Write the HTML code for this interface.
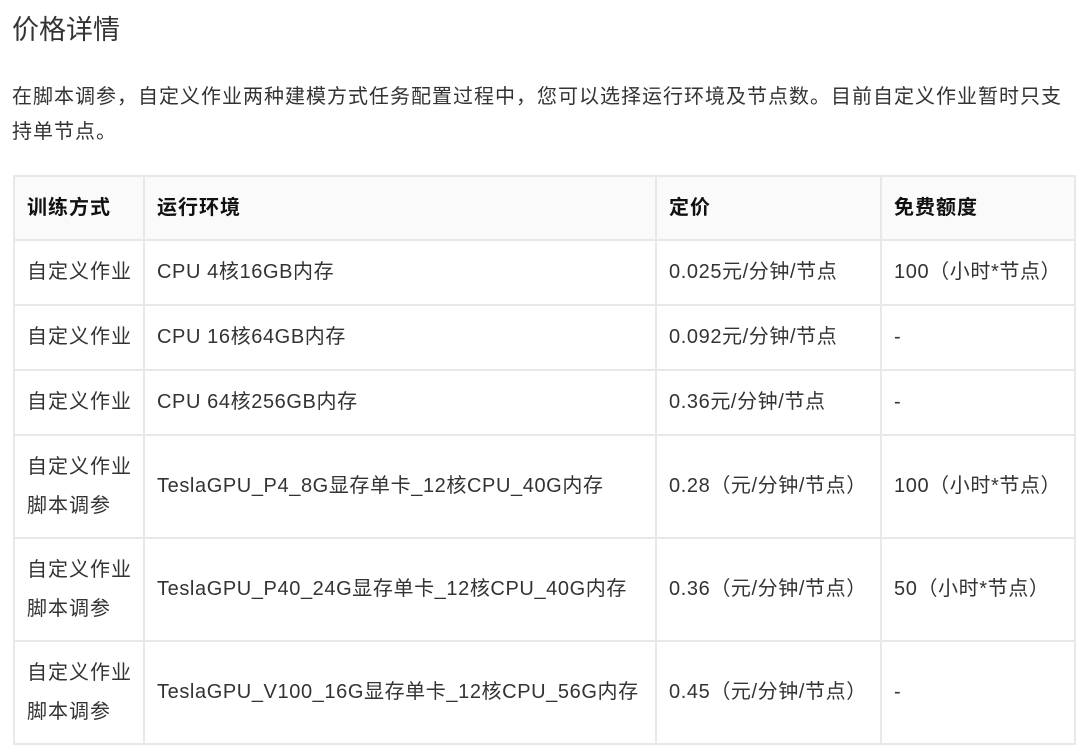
<!DOCTYPE html>
<html><head><meta charset="utf-8"><style>
body{margin:0;background:#fff;font-family:"Liberation Sans","Noto Sans CJK SC",sans-serif;color:#333;}
h1{position:absolute;left:12px;top:12px;margin:0;font-size:27px;font-weight:normal;line-height:36px;color:#333}
p{position:absolute;left:12px;top:80px;width:1060px;margin:0;font-size:20px;letter-spacing:1px;line-height:35px}
table{position:absolute;left:13px;top:175px;border-collapse:collapse;font-size:20px;table-layout:fixed;width:1061px}
td,th{border:2px solid #e8e8e8;padding:0 12px;text-align:left;line-height:39px;vertical-align:middle;white-space:nowrap;overflow:hidden;letter-spacing:0.6px}
th{background:#fafafa;font-weight:bold;color:#111;height:62px}
tr.s td{height:63px}
tr.d td{height:101px}
.c{letter-spacing:1px}
</style></head><body>
<h1>价格详情</h1>
<p>在脚本调参，自定义作业两种建模方式任务配置过程中，您可以选择运行环境及节点数。目前自定义作业暂时只支持单节点。</p>
<table>
<colgroup><col style="width:130px"><col style="width:512px"><col style="width:225px"><col style="width:194px"></colgroup>
<tr><th class="c">训练方式</th><th class="c">运行环境</th><th class="c">定价</th><th class="c">免费额度</th></tr>
<tr class="s"><td class="c">自定义作业</td><td>CPU 4核16GB内存</td><td>0.025元/分钟/节点</td><td>100（小时*节点）</td></tr>
<tr class="s"><td class="c">自定义作业</td><td>CPU 16核64GB内存</td><td>0.092元/分钟/节点</td><td>-</td></tr>
<tr class="s"><td class="c">自定义作业</td><td>CPU 64核256GB内存</td><td>0.36元/分钟/节点</td><td>-</td></tr>
<tr class="d"><td class="c">自定义作业<br>脚本调参</td><td>TeslaGPU_P4_8G显存单卡_12核CPU_40G内存</td><td>0.28（元/分钟/节点）</td><td>100（小时*节点）</td></tr>
<tr class="d"><td class="c">自定义作业<br>脚本调参</td><td>TeslaGPU_P40_24G显存单卡_12核CPU_40G内存</td><td>0.36（元/分钟/节点）</td><td>50（小时*节点）</td></tr>
<tr class="d"><td class="c">自定义作业<br>脚本调参</td><td>TeslaGPU_V100_16G显存单卡_12核CPU_56G内存</td><td>0.45（元/分钟/节点）</td><td>-</td></tr>
</table>
</body></html>
